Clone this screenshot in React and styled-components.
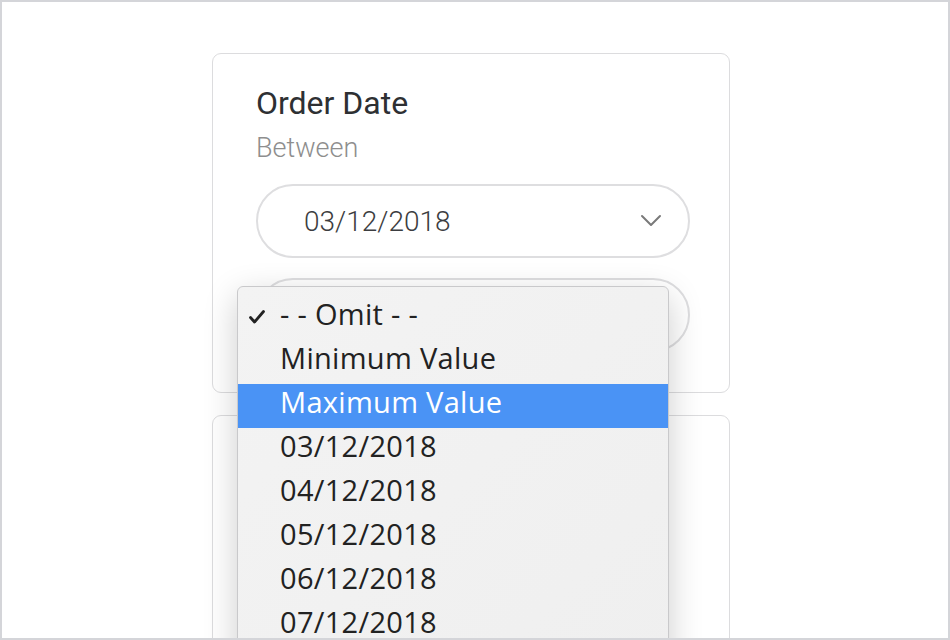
import React from 'react'
import styled, { createGlobalStyle } from 'styled-components'

const GlobalStyle = createGlobalStyle`
  html, body {
    margin: 0;
    padding: 0;
    background: #fff;
  }
`

const OPTIONS = [
  '- - Omit - -',
  'Minimum Value',
  'Maximum Value',
  '03/12/2018',
  '04/12/2018',
  '05/12/2018',
  '06/12/2018',
  '07/12/2018',
  '08/12/2018'
]

const SELECTED = 0
const HIGHLIGHTED = 2

function Chevron() {
  return (
    <svg width="22" height="14" viewBox="0 0 22 14" fill="none">
      <path d="M2 2l9 9 9-9" stroke="#7a7a7a" strokeWidth="2" strokeLinecap="round" strokeLinejoin="round" />
    </svg>
  )
}

function Check() {
  return (
    <svg width="16" height="14" viewBox="0 0 16 14" fill="none">
      <path d="M1.5 7.5l4 4.5L14.5 1.5" stroke="#222" strokeWidth="2.8" strokeLinecap="round" strokeLinejoin="round" />
    </svg>
  )
}

function App() {
  return (
    <>
      <GlobalStyle />
      <Frame>
        <Card>
          <Title>Order Date</Title>
          <Subtitle>Between</Subtitle>
          <Select>
            <Value>03/12/2018</Value>
            <Chevron />
          </Select>
          <SelectWrap>
            <Select />
            <Menu>
              {OPTIONS.map((opt, i) => (
                <MenuItem key={opt} active={i === HIGHLIGHTED}>
                  <CheckSlot>{i === SELECTED && <Check />}</CheckSlot>
                  {opt}
                </MenuItem>
              ))}
            </Menu>
          </SelectWrap>
        </Card>
        <Card tall />
      </Frame>
    </>
  )
}

const Frame = styled.div`
  box-sizing: border-box;
  width: 950px;
  height: 640px;
  border: 2px solid #d4d5d9;
  overflow: hidden;
  display: flex;
  flex-direction: column;
  gap: 22px;
  padding: 51px 0 0 210px;
  font-family: Roboto, 'Liberation Sans', sans-serif;
`

const Card = styled.div`
  box-sizing: border-box;
  width: 518px;
  flex-shrink: 0;
  height: ${props => (props.tall ? '300px' : 'auto')};
  border: 1.5px solid #dcdcde;
  border-radius: 9px;
  padding: 30px 39px 40px 43px;
  display: flex;
  flex-direction: column;
  background: #fff;
`

const Title = styled.div`
  font-size: 32px;
  line-height: 38px;
  color: #2e3033;
`

const Subtitle = styled.div`
  margin-top: 10px;
  font-size: 27px;
  font-weight: 300;
  line-height: 32px;
  color: #8e8e8e;
`

const SelectWrap = styled.div`
  position: relative;
  margin-top: 20px;
`

const Select = styled.div`
  box-sizing: border-box;
  height: 74px;
  border: 2px solid #dedee0;
  border-radius: 37px;
  display: flex;
  align-items: center;
  justify-content: space-between;
  padding: 0 26px 0 46px;
  margin-top: 20px;
  ${SelectWrap} & {
    margin-top: 0;
  }
`

const Value = styled.span`
  font-size: 28px;
  font-weight: 300;
  color: #3c3d40;
`

const Menu = styled.div`
  position: absolute;
  left: -19px;
  top: 8px;
  width: 432px;
  box-sizing: border-box;
  padding-top: 9px;
  background: linear-gradient(135deg, #f3f3f3, #efefef);
  border: 1px solid #c9c9cb;
  border-radius: 6px;
  box-shadow: 0 10px 34px rgba(0, 0, 0, 0.2);
  z-index: 5;
  font-family: 'Open Sans', Inter, sans-serif;
`

const MenuItem = styled.div`
  box-sizing: border-box;
  height: 44px;
  padding-bottom: 9px;
  display: flex;
  align-items: center;
  font-size: 29px;
  font-weight: 500;
  letter-spacing: 0.3px;
  color: ${props => (props.active ? '#fff' : '#222')};
  background: ${props => (props.active ? '#4a93f5' : 'transparent')};
`

const CheckSlot = styled.span`
  width: 42px;
  display: flex;
  justify-content: flex-end;
  padding: 7px 15px 0 0;
  box-sizing: border-box;
`

export default App
